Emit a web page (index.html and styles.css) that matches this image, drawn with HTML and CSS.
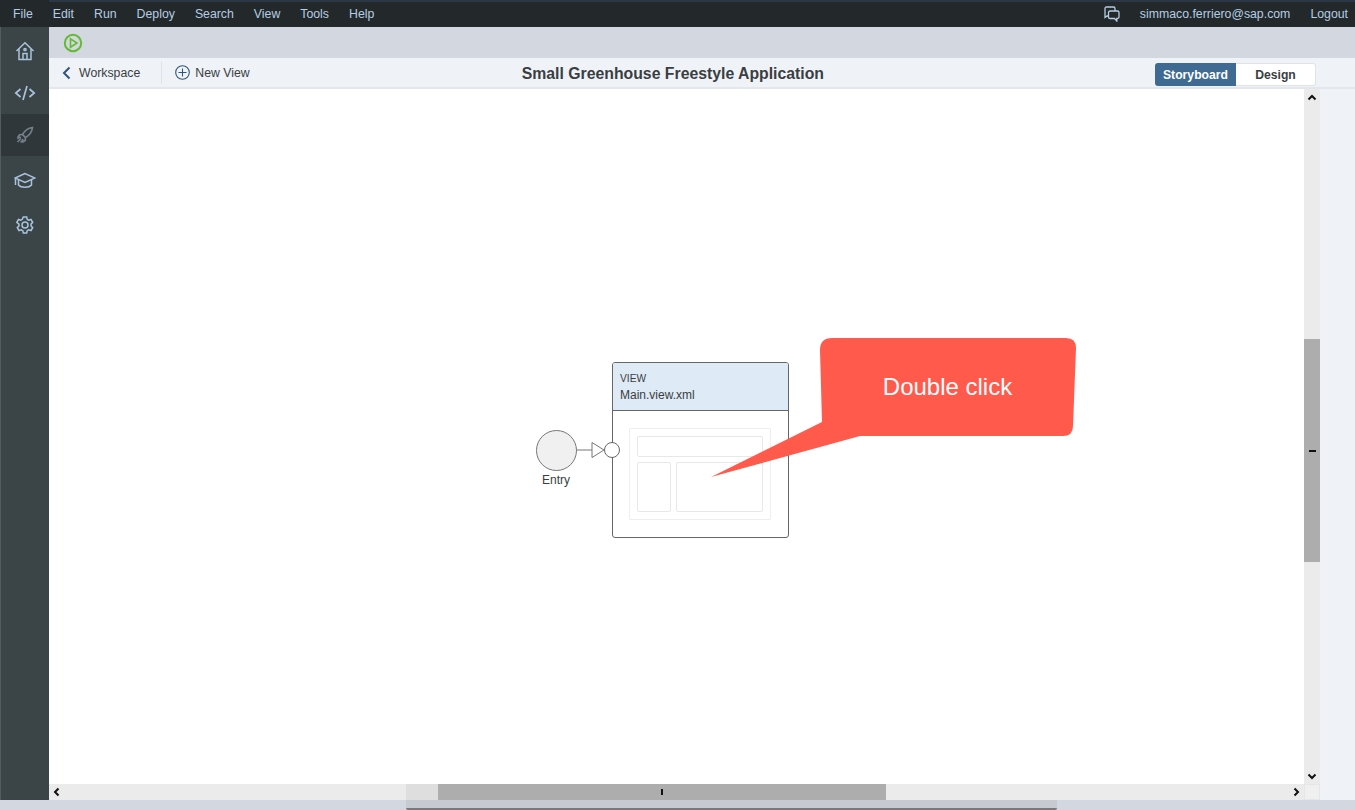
FILE: index.html
```html
<!DOCTYPE html>
<html lang="en">
<head>
  <meta charset="UTF-8" />
  <meta name="viewport" content="width=device-width, initial-scale=1" />
  <title>Small Greenhouse Freestyle Application</title>
  <link rel="stylesheet" href="styles.css">
</head>
<body>

<nav class="menubar">
  <a>File</a>
  <a>Edit</a>
  <a>Run</a>
  <a>Deploy</a>
  <a>Search</a>
  <a>View</a>
  <a>Tools</a>
  <a>Help</a>
  <svg class="chat-icon" width="16" height="16" viewBox="0 0 16 16" fill="none" stroke="currentColor" stroke-width="1.3">
    <path d="M4.500 10H3L1 11.500V2.500Q1 1 2.500 1H9.500Q11 1 11 2.500V5"/>
    <path d="M6 5H13.500Q15 5 15 6.500V11Q15 12.500 13.500 12.500H12.800V15L10.500 12.500H6Q4.500 12.500 4.500 11V6.500Q4.500 5 6 5Z"/>
  </svg>
  <a class="user">simmaco.ferriero@sap.com</a>
  <a class="logout">Logout</a>
</nav>

<div class="main">
  <aside class="sidebar">
    <div class="side-item">
      <svg width="20" height="20" viewBox="0 0 20 20" fill="none" stroke="currentColor" stroke-width="1.500">
        <path d="M1.500 10L10 1.800 18.500 10"/>
        <path d="M4 8v10.500h12V8"/>
        <path d="M8 18.500v-6h4v6"/>
        <circle cx="10" cy="8.500" r="1.100"/>
      </svg>
    </div>
    <div class="side-item">
      <svg width="22" height="20" viewBox="0 0 22 20" fill="none" stroke="currentColor" stroke-width="1.700">
        <path d="M6.500 6L1.800 10l4.700 4"/>
        <path d="M15.500 6l4.700 4-4.700 4"/>
        <path d="M13 3L9 17"/>
      </svg>
    </div>
    <div class="side-item active">
      <svg width="18" height="18" viewBox="0 0 18 18" fill="none" stroke="currentColor" stroke-width="1.600">
        <path d="M16.500 1.500C12 2 9 4 6.500 8.500l3 3C14 9 16 6 16.500 1.500Z"/>
        <path d="M6.500 8.500L3.500 8.800 2 11l3 .5"/>
        <path d="M9.500 11.500L9.200 14.500 7 16l-.5-3"/>
        <path d="M5 12.500l-3.500 3.500M6.500 14.500l-2 2M3 11.500l-1.500 1.500"/>
      </svg>
    </div>
    <div class="side-item learn">
      <svg width="22" height="17" viewBox="0 0 22 17" fill="none" stroke="currentColor" stroke-width="1.500">
        <path d="M11 1.500L1 6l10 4.500L21 6Z"/>
        <path d="M4.500 8v5c2.500 3 10.500 3 13 0V8"/>
        <path d="M1.500 6.500V13"/>
      </svg>
    </div>
    <div class="side-item settings">
      <svg width="18" height="18" viewBox="0 0 18 18" fill="none" stroke="currentColor" stroke-width="1.500">
        <circle cx="9" cy="9" r="3"/>
        <path d="M7.300 1h3.400l.5 2.300 1.500.9 2.300-.7 1.700 2.900-1.700 1.700v1.800l1.700 1.700-1.700 2.900-2.300-.7-1.500.9-.5 2.300H7.300l-.5-2.300-1.500-.9-2.300.7-1.700-2.900 1.700-1.700V8.100L.8 6.400l1.700-2.900 2.300.7 1.500-.9Z"/>
      </svg>
    </div>
  </aside>

  <section class="content">
    <div class="toolbar">
      <svg width="20" height="20" viewBox="0 0 20 20" fill="none" stroke="#62bb32">
        <circle cx="10" cy="10" r="8.200" stroke-width="2"/>
        <path d="M7.500 5.800L14 10l-6.500 4.200Z" stroke-width="1.600"/>
      </svg>
    </div>

    <header class="view-header">
      <a class="back">
        <svg width="9" height="14" viewBox="0 0 9 14" fill="none" stroke="#2f5578" stroke-width="2">
          <path d="M7.500 1.500L2 7l5.500 5.500"/>
        </svg>
        Workspace
      </a>
      <span class="divider"></span>
      <a class="new-view">
        <svg width="15" height="15" viewBox="0 0 15 15" fill="none" stroke="#2f5578" stroke-width="1.100">
          <circle cx="7.500" cy="7.500" r="6.800"/>
          <path d="M7.500 3.500v8M3.500 7.500h8"/>
        </svg>
        New View
      </a>
      <h1>Small Greenhouse Freestyle Application</h1>
      <div class="switch">
        <button class="on">Storyboard</button>
        <button>Design</button>
      </div>
    </header>

    <div class="work">
      <div class="canvas">
        <div class="entry"></div>
        <div class="entry-label">Entry</div>
        <svg class="connector" width="30" height="18" viewBox="0 0 30 18" fill="none" stroke="#777">
          <path d="M0 9H16"/>
          <path d="M16 1.500L28 9 16 16.500Z" fill="#fff"/>
        </svg>

        <div class="view-node">
          <div class="node-head">
            <div class="node-type">VIEW</div>
            <div class="node-name">Main.view.xml</div>
          </div>
          <div class="wire">
            <div class="wire-top"></div>
            <div class="wire-left"></div>
            <div class="wire-right"></div>
          </div>
        </div>
        <div class="port"></div>

        <svg class="callout" width="365" height="139" viewBox="0 0 365 139">
          <path d="M121 0H355Q365 0 365 10L362 88Q362 98 352 98H149L0 139 111 84 109 12Q109 0 121 0Z" fill="#ff5a4c"/>
        </svg>
        <div class="callout-text">Double click</div>
      </div>

      <div class="vscroll">
        <svg class="arrow" width="10" height="7" viewBox="0 0 10 7" fill="none" stroke="#111" stroke-width="2"><path d="M1.500 5.500L5 2l3.500 3.500"/></svg>
        <div class="vtrack">
          <div class="vthumb"><span></span></div>
        </div>
        <svg class="arrow" width="10" height="7" viewBox="0 0 10 7" fill="none" stroke="#111" stroke-width="2"><path d="M1.500 1.500L5 5l3.500-3.500"/></svg>
      </div>

      <div class="strip"></div>

      <div class="hscroll">
        <svg class="arrow" width="7" height="10" viewBox="0 0 7 10" fill="none" stroke="#111" stroke-width="2"><path d="M5.500 1.500L2 5l3.500 3.500"/></svg>
        <div class="htrack">
          <div class="hthumb"><span></span></div>
        </div>
        <svg class="arrow" width="7" height="10" viewBox="0 0 7 10" fill="none" stroke="#111" stroke-width="2"><path d="M1.500 1.500L5 5 1.500 8.500"/></svg>
      </div>
      <div class="corner"></div>
    </div>
  </section>
</div>

<footer class="bottom">
  <div class="bottom-bar"></div>
</footer>

</body>
</html>
```

FILE: styles.css
```css
:root {
  --menu-bg: #23282a;
  --menu-text: #b5cde3;
  --side-bg: #3b4447;
  --side-active: #2f373a;
  --toolbar-bg: #d3d7df;
  --panel-bg: #eff3f8;
  --track: #ebebeb;
  --track-dark: #dedede;
  --thumb: #adadad;
  --text: #3a3e42;
}

* {
  box-sizing: border-box;
}
html, body {
  height: 100%;
}
body {
  margin: 0;
  overflow: hidden;
  display: flex;
  flex-direction: column;
  font-family: "Liberation Sans", Arial, sans-serif;
  font-size: 12.3px;
  color: var(--text);
  background-color: var(--toolbar-bg);
}

/* Top menu */
.menubar {
  flex: 0 0 27px;
  display: flex;
  align-items: center;
  gap: 20px;
  padding: 0 7px 0 13px;
  background: linear-gradient(#2b3744, #2b3744) 49px 0 / 100% 2px no-repeat, var(--menu-bg);
  color: var(--menu-text);
}
.chat-icon {
  margin-left: auto;
  margin-top: 1px;
}

.main {
  flex: 1;
  min-height: 0;
  display: flex;
}

/* Left rail */
.sidebar {
  flex: 0 0 49px;
  padding-top: 3px;
  background-color: var(--side-bg);
  border-left: 1px solid #555c5f;
  color: #a9c3dc;
}
.side-item {
  height: 42px;
  display: flex;
  align-items: center;
  justify-content: center;
}
.side-item.active {
  background-color: var(--side-active);
  color: #75828a;
}
.side-item.learn {
  margin-top: 3px;
}
.side-item.settings {
  margin-top: 3px;
}

.content {
  flex: 1;
  min-width: 0;
  display: flex;
  flex-direction: column;
}
.toolbar {
  flex: 0 0 31px;
  display: flex;
  align-items: center;
  padding-left: 14px;
  background-color: var(--toolbar-bg);
}

/* View header */
.view-header {
  flex: 0 0 31px;
  display: flex;
  align-items: center;
  padding: 0 39px 0 13px;
  background-color: var(--panel-bg);
  border-bottom: 2px solid #e3e6ea;
}
.back, .new-view {
  display: flex;
  align-items: center;
}
.back {
  gap: 8px;
}
.new-view {
  gap: 5px;
}
.divider {
  width: 1px;
  height: 22px;
  margin: 0 13px 0 21px;
  background-color: #dfe3e8;
}
.view-header h1 {
  margin: 2px 0 0 272px;
  font-size: 15.800px;
  font-weight: 700;
}
.switch {
  margin: 4px 0 0 auto;
  display: flex;
}
.switch button {
  width: 80px;
  height: 23px;
  padding: 0;
  border: 1px solid #dfe3e8;
  border-left: none;
  border-radius: 0 3px 3px 0;
  background-color: #fff;
  color: var(--text);
  font-family: inherit;
  font-size: 12.200px;
  font-weight: 700;
}
.switch button.on {
  width: 81px;
  border: none;
  border-radius: 3px 0 0 3px;
  background-color: #3f6a92;
  color: #fff;
}

/* Canvas and its scrollbars */
.work {
  flex: 1;
  min-height: 0;
  display: grid;
  grid-template-columns: 1fr 16px 35px;
  grid-template-rows: 1fr 16px;
}
.canvas {
  position: relative;
  overflow: hidden;
  background-color: #fff;
}
.entry {
  position: absolute;
  left: 487px;
  top: 341px;
  width: 41px;
  height: 41px;
  border: 1px solid #777;
  border-radius: 50%;
  background-color: #f0f0f0;
}
.entry-label {
  position: absolute;
  left: 477px;
  top: 384px;
  width: 60px;
  text-align: center;
  font-size: 12px;
}
.connector {
  position: absolute;
  left: 527px;
  top: 352px;
}
.view-node {
  position: absolute;
  left: 563px;
  top: 273px;
  width: 177px;
  height: 176px;
  border: 1px solid #666;
  border-radius: 3px;
  background-color: #fff;
}
.node-head {
  height: 48px;
  padding: 9px 7px 0;
  background-color: #deeaf6;
  border-bottom: 1px solid #666;
  border-radius: 2px 2px 0 0;
}
.node-type {
  font-size: 10.200px;
  line-height: 14px;
}
.node-name {
  margin-top: 1px;
  font-size: 12px;
  line-height: 16px;
}
.wire {
  width: 142px;
  height: 92px;
  margin: 17px 0 0 16px;
  padding: 7px;
  display: grid;
  grid-template-columns: 34px 1fr;
  grid-template-rows: 21px 1fr;
  gap: 5px;
  border: 1px solid #eee;
  border-radius: 1px;
}
.wire div {
  border: 1px solid #e8e8e8;
  border-radius: 2px;
}
.wire-top {
  grid-column: 1 / 3;
}
.port {
  position: absolute;
  left: 555px;
  top: 353px;
  width: 16px;
  height: 16px;
  border: 1px solid #666;
  border-radius: 50%;
  background-color: #fff;
}
.callout {
  position: absolute;
  left: 662px;
  top: 249px;
}
.callout-text {
  position: absolute;
  left: 771px;
  top: 249px;
  width: 255px;
  height: 98px;
  display: flex;
  align-items: center;
  justify-content: center;
  font-size: 24px;
  color: #fff;
}

.vscroll {
  display: flex;
  flex-direction: column;
  align-items: center;
  padding: 5px 0 4px;
  background-color: var(--track);
}
.vtrack {
  flex: 1;
  width: 100%;
  padding-top: 238px;
}
.vthumb {
  height: 223px;
  display: flex;
  align-items: center;
  justify-content: center;
  background-color: var(--thumb);
}
.vthumb span {
  width: 7px;
  height: 2px;
  background-color: #111;
}
.strip {
  grid-column: 3;
  grid-row: 1 / 3;
  background-color: var(--panel-bg);
}
.hscroll {
  display: flex;
  align-items: center;
  padding: 0 4px;
  background: linear-gradient(to right, var(--track) 357px, var(--track-dark) 357px, var(--track-dark) 389px, var(--track) 389px);
}
.htrack {
  flex: 1;
  height: 100%;
  padding-left: 378px;
}
.hthumb {
  width: 448px;
  height: 100%;
  display: flex;
  align-items: center;
  justify-content: center;
  background-color: var(--thumb);
}
.hthumb span {
  width: 2px;
  height: 6px;
  background-color: #111;
}
.corner {
  background-color: #f0f0f0;
  border: 1px solid #e6e6e6;
}

/* Bottom edge */
.bottom {
  flex: 0 0 10px;
  display: flex;
  align-items: flex-end;
  padding-left: 406px;
  background-color: var(--toolbar-bg);
}
.bottom-bar {
  width: 651px;
  height: 10px;
  background-color: #c6cbd1;
  border-bottom: 2px solid #77797c;
  border-radius: 0 0 2px 2px;
}
```
